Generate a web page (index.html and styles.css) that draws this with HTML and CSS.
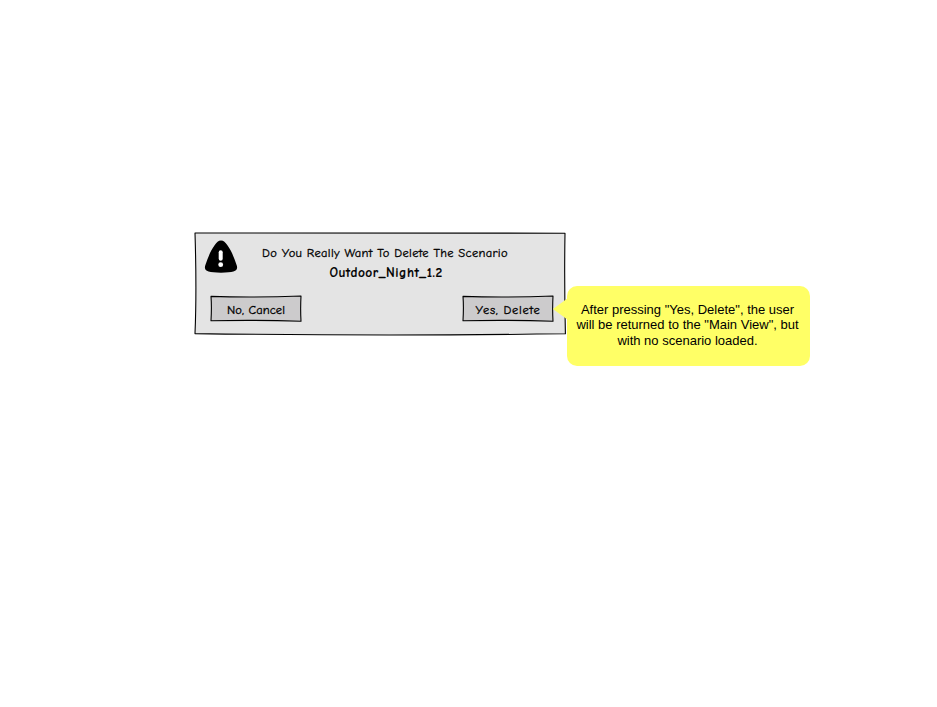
FILE: index.html
```html
<!DOCTYPE html>
<html lang="en">
<head>
<meta charset="utf-8">
<title>Delete Scenario</title>
<link rel="stylesheet" href="styles.css">
</head>
<body>
<main class="dialog">
  <svg class="sketch" viewBox="0 0 374 106" aria-hidden="true">
    <path class="panel" d="M2 2 Q190 1.6 372 2.2 Q371.2 50 372.4 102.8 Q190 105.2 2 102.6 Q3.8 60 2 2Z"/>
  </svg>
  <header class="heading">
    <svg class="warning" viewBox="0 0 34 34" aria-hidden="true">
      <path d="M17 .5C19.7.5 21.2 2.4 23.4 5.3C27.4 10.8 30.3 18 32.6 25C34.6 30.8 31 32.7 17 32.7S-.6 30.8 1.4 25C3.7 18 6.6 10.8 10.6 5.3C12.8 2.4 14.3.5 17 .5Z"/>
      <path class="mark" d="M16.7 12.3V18.8"/>
      <circle class="dot" cx="16.7" cy="24.7" r="2.4"/>
    </svg>
    <div class="message">
      <p class="question">Do You Really Want To Delete The Scenario</p>
      <p class="name">Outdoor_Night_1.2</p>
    </div>
  </header>
  <div class="actions">
    <button class="button cancel">
      <svg class="sketch" viewBox="0 0 94 30" aria-hidden="true"><path class="face" d="M2 2.4Q45 3.8 92 2Q91.3 15 92 27.2Q45 25.8 2 26.8Q2.8 13 2 2.4Z"/></svg>
      <span>No, Cancel</span>
    </button>
    <button class="button confirm">
      <svg class="sketch" viewBox="0 0 94 30" aria-hidden="true"><path class="face" d="M2 2.4Q45 3.8 92 2Q91.3 15 92 27.2Q45 25.8 2 26.8Q2.8 13 2 2.4Z"/></svg>
      <span>Yes, Delete</span>
    </button>
  </div>
  <aside class="callout">
    <svg class="tail" viewBox="0 0 15 22" aria-hidden="true"><path d="M0 11L15 0V22Z"/></svg>
    <p>After pressing "Yes, Delete", the user<br>will be returned to the "Main View", but<br>with no scenario loaded.</p>
  </aside>
</main>
</body>
</html>
```
FILE: styles.css
```css
* { box-sizing: border-box; }
body { margin: 0; min-height: 100vh; padding: 231px 0 0 193px; background: #fff; color: #000; }
p { margin: 0; white-space: nowrap; }

.dialog {
  position: relative;
  width: 374px;
  height: 106px;
  font-family: "Comic Sans MS", "Comic Neue", Lato, sans-serif;
  font-size: 12.5px;
  -webkit-text-stroke: 0.3px #000;
}
.sketch { position: absolute; inset: 0; width: 100%; height: 100%; z-index: -1; }
.panel, .face { stroke: #000; stroke-width: 1.1; stroke-linejoin: round; }
.panel { fill: #e4e4e4; }
.face { fill: #cccbcc; }

.heading { display: flex; padding: 9px 0 0 11px; height: 63px; }
.warning { width: 34px; height: 34px; flex: none; }
.mark { stroke: #fff; stroke-width: 4; stroke-linecap: round; }
.dot { fill: #fff; }
.message { width: 294px; text-align: center; line-height: 20px; padding-top: 3px; }
.question { letter-spacing: 0.33px; }
.name { font-size: 13.4px; font-weight: 700; letter-spacing: 0.5px; padding-left: 2px; -webkit-text-stroke: 0.15px #000; }

.actions { display: flex; justify-content: space-between; padding: 0 12px 0 16px; }
.button {
  position: relative;
  z-index: 0;
  width: 94px;
  height: 30px;
  padding: 1px 0 0;
  border: 0;
  background: none;
  color: #000;
  font: inherit;
  white-space: nowrap;
}
.cancel { letter-spacing: 0.08px; }
.confirm { letter-spacing: 0.72px; }

.callout {
  position: absolute;
  left: 373.5px;
  top: 54.6px;
  width: 243px;
  height: 80px;
  padding: 16.4px 1px 0 0;
  border-radius: 10px;
  background: #ffff66;
  font: 13px/15.5px "Liberation Sans", Arial, sans-serif;
  text-align: center;
  -webkit-text-stroke: 0;
}
.tail { position: absolute; left: -14px; top: 12px; width: 15px; height: 22px; fill: #ffff66; }
```
